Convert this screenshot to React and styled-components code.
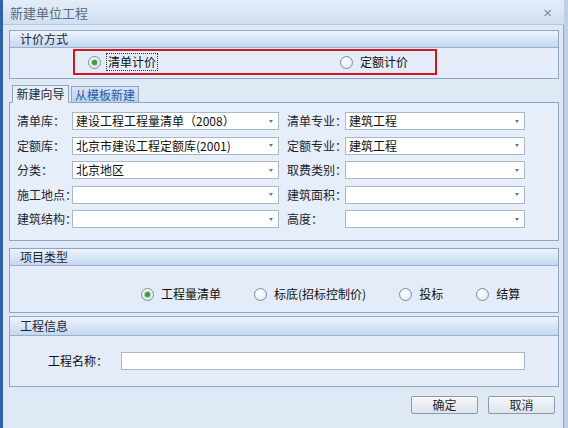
import styled, { createGlobalStyle } from "styled-components";

const GlobalStyle = createGlobalStyle`
  html, body {
    margin: 0;
    padding: 0;
    background: #dde8f5;
  }
  body {
    font-family: "Noto Sans CJK SC", "Liberation Sans", sans-serif;
    font-size: 12px;
    color: #111;
  }
`

const leftRows = [
    { label: "清单库：", value: "建设工程工程量清单（2008）" },
    { label: "定额库：", value: "北京市建设工程定额库(2001)" },
    { label: "分类：", value: "北京地区" },
    { label: "施工地点：", value: "" },
    { label: "建筑结构：", value: "" },
]

const rightRows = [
    { label: "清单专业：", value: "建筑工程" },
    { label: "定额专业：", value: "建筑工程" },
    { label: "取费类别：", value: "" },
    { label: "建筑面积：", value: "" },
    { label: "高度：", value: "" },
]

const projectTypes = ["工程量清单", "标底(招标控制价)", "投标", "结算"]

const Select = ({ value }) => (
    <SelectBox>
        <span>{value}</span>
        <Arrow />
    </SelectBox>
)

const Radio = ({ checked, focused, children }) => (
    <Option>
        <RadioDot $checked={checked} />
        <OptionText $focused={focused}>{children}</OptionText>
    </Option>
)

const App = () => {
    return (
        <>
            <GlobalStyle />
            <Window>
                <TitleBar>
                    <Title>新建单位工程</Title>
                    <Close>×</Close>
                </TitleBar>
                <Body>
                    <Panel>
                        <PanelHeader>计价方式</PanelHeader>
                        <PricingBody>
                            <Highlight>
                                <Radio checked focused>清单计价</Radio>
                                <Radio>定额计价</Radio>
                            </Highlight>
                        </PricingBody>
                    </Panel>

                    <Tabs>
                        <Tab $active>新建向导</Tab>
                        <Tab>从模板新建</Tab>
                    </Tabs>
                    <TabPanel>
                        <FormColumn>
                            {leftRows.map((r) => (
                                <FormRow key={r.label} $labelWidth={55}>
                                    <Label>{r.label}</Label>
                                    <Select value={r.value} />
                                </FormRow>
                            ))}
                        </FormColumn>
                        <FormColumn>
                            {rightRows.map((r) => (
                                <FormRow key={r.label} $labelWidth={58}>
                                    <Label>{r.label}</Label>
                                    <Select value={r.value} />
                                </FormRow>
                            ))}
                        </FormColumn>
                    </TabPanel>

                    <Panel $top={7}>
                        <PanelHeader>项目类型</PanelHeader>
                        <TypeBody>
                            {projectTypes.map((t, i) => (
                                <Radio key={t} checked={i === 0}>{t}</Radio>
                            ))}
                        </TypeBody>
                    </Panel>

                    <Panel $top={3}>
                        <PanelHeader $tall>工程信息</PanelHeader>
                        <InfoBody>
                            <InfoLabel>工程名称：</InfoLabel>
                            <TextInput />
                        </InfoBody>
                    </Panel>

                    <Footer>
                        <Button>确定</Button>
                        <Button>取消</Button>
                    </Footer>
                </Body>
            </Window>
        </>
    )
}

const Window = styled.div`
  width: 568px;
  height: 428px;
  box-sizing: border-box;
  display: flex;
  flex-direction: column;
  background: #dfe9f6;
  border-left: 3px solid #2f62a6;
  border-right: 4px solid #bcd0ea;
  box-shadow: inset -1px 0 0 #8aa6cc;
  overflow: hidden;
`

const TitleBar = styled.div`
  height: 25px;
  box-sizing: border-box;
  display: flex;
  align-items: center;
  justify-content: space-between;
  padding: 0 12px 0 7px;
  background: linear-gradient(#e4edf8, #cfdff2);
  border-bottom: 1px solid #b3c7e0;
`

const Title = styled.div`
  font-size: 13px;
  color: #5d6b7a;
  line-height: 1;
`

const Close = styled.div`
  font-family: "Liberation Sans", sans-serif;
  font-size: 15px;
  color: #7f8e9e;
  line-height: 1;
`

const Body = styled.div`
  display: flex;
  flex-direction: column;
  padding: 5px 5px 0 6px;
`

const Panel = styled.div`
  margin-top: ${(p) => p.$top || 0}px;
  border: 1px solid #8fa5c1;
  background: #e3ecf8;
`

const PanelHeader = styled.div`
  height: ${(p) => (p.$tall ? 19 : 17)}px;
  box-sizing: border-box;
  padding-left: 10px;
  display: flex;
  align-items: center;
  line-height: 1;
  color: #1d2633;
  background: linear-gradient(#edf3fb, #c4d8f0);
  border-bottom: 1px solid #98b0cf;
`

const PricingBody = styled.div`
  height: 30px;
  padding: 1px 0 0 63px;
  box-sizing: border-box;
`

const Highlight = styled.div`
  width: 364px;
  height: 26px;
  box-sizing: border-box;
  border: 2px solid #d6161e;
  display: flex;
  align-items: center;
  justify-content: space-between;
  padding: 0 25px 0 13px;
`

const Option = styled.div`
  display: flex;
  align-items: center;
  gap: 5px;
`

const RadioDot = styled.span`
  width: 11px;
  height: 11px;
  border-radius: 50%;
  border: 1px solid #7c8ca2;
  background: radial-gradient(circle at 40% 35%, #ffffff, #dfe5ec);
  display: flex;
  align-items: center;
  justify-content: center;

  &::after {
    content: "";
    display: ${(p) => (p.$checked ? "block" : "none")};
    width: 5px;
    height: 5px;
    border-radius: 50%;
    background: #3f9a44;
    box-shadow: 0 0 0 1px #a9d6a4;
  }
`

const OptionText = styled.span`
  line-height: 14px;
  padding: 1px 1px;
  border: 1px dotted ${(p) => (p.$focused ? "#333" : "transparent")};
`

const Tabs = styled.div`
  margin-top: 6px;
  display: flex;
  gap: 2px;
  padding-left: 3px;
  height: 18px;
  position: relative;
  z-index: 1;
`

const Tab = styled.div`
  width: ${(p) => (p.$active ? 57 : 68)}px;
  box-sizing: border-box;
  display: flex;
  align-items: center;
  justify-content: center;
  line-height: 1;
  margin-top: ${(p) => (p.$active ? 0 : 1)}px;
  border: 1px solid #8fa5c1;
  border-bottom: ${(p) => (p.$active ? "1px solid #e6eef9" : "1px solid #8fa5c1")};
  background: ${(p) => (p.$active ? "#e6eef9" : "linear-gradient(#d6e4f5, #bcd3ee)")};
  color: ${(p) => (p.$active ? "#1d2633" : "#2a5aa8")};
`

const TabPanel = styled.div`
  margin-top: -1px;
  height: 139px;
  box-sizing: border-box;
  border: 1px solid #8fa5c1;
  background: #e6eef9;
  display: grid;
  grid-template-columns: 262px 1fr;
  column-gap: 8px;
  padding: 9px 33px 0 7px;
`

const FormColumn = styled.div`
  display: flex;
  flex-direction: column;
  gap: 6.5px;
`

const FormRow = styled.div`
  display: grid;
  grid-template-columns: ${(p) => p.$labelWidth}px 1fr;
  align-items: center;
  height: 18px;
`

const Label = styled.span`
  white-space: nowrap;
  line-height: 1;
  color: #1d2633;
`

const SelectBox = styled.div`
  height: 18px;
  box-sizing: border-box;
  border: 1px solid #a9b8cb;
  background: #fff;
  display: flex;
  align-items: center;
  justify-content: space-between;
  padding: 0 5px 0 3px;
  line-height: 1;
  white-space: nowrap;
`

const Arrow = styled.span`
  width: 0;
  height: 0;
  border-left: 2.5px solid transparent;
  border-right: 2.5px solid transparent;
  border-top: 3px solid #6b7582;
`

const TypeBody = styled.div`
  height: 46px;
  box-sizing: border-box;
  display: flex;
  align-items: center;
  gap: 31px;
  padding: 10px 0 0 131px;
`

const InfoBody = styled.div`
  height: 50px;
  display: flex;
  align-items: center;
  padding-left: 38px;
`

const InfoLabel = styled.span`
  width: 73px;
  line-height: 1;
`

const TextInput = styled.div`
  width: 404px;
  height: 18px;
  box-sizing: border-box;
  border: 1px solid #a9b8cb;
  background: #fff;
`

const Footer = styled.div`
  margin-top: 9px;
  display: flex;
  justify-content: flex-end;
  gap: 10px;
  padding-right: 4px;
`

const Button = styled.div`
  width: 67px;
  height: 18px;
  box-sizing: border-box;
  display: flex;
  align-items: center;
  justify-content: center;
  line-height: 1;
  border: 1px solid #8d9aab;
  border-radius: 2px;
  background: linear-gradient(#f7f9fb, #dde3ea);
  color: #1d2633;
`

export default App;
